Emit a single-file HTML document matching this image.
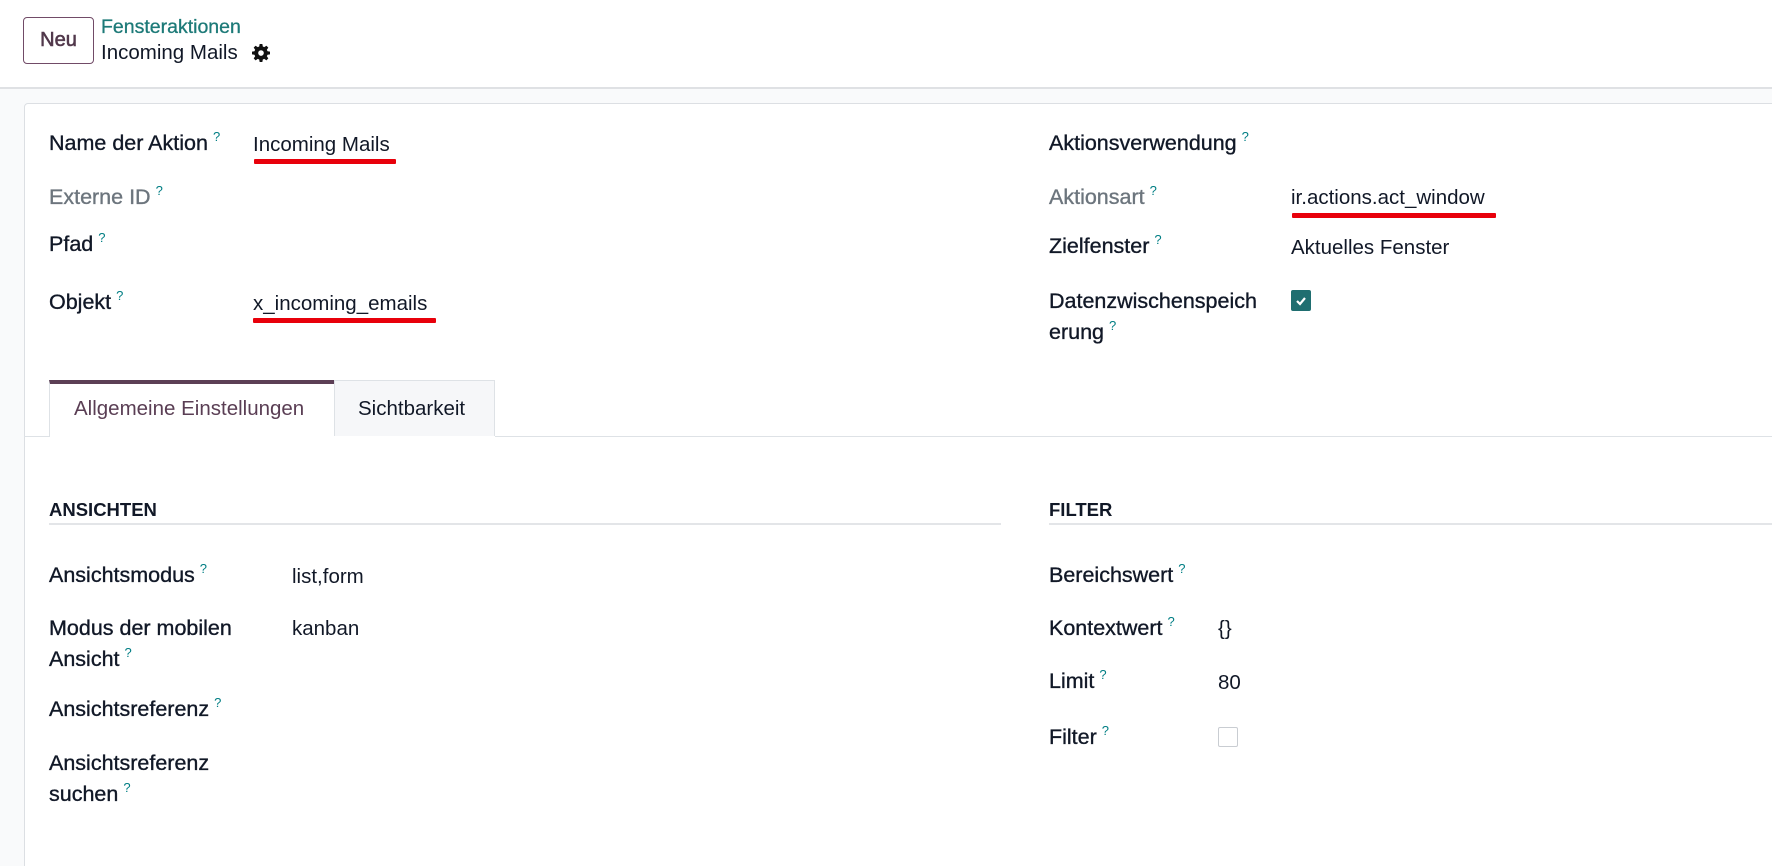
<!DOCTYPE html>
<html><head><meta charset="utf-8"><style>
*{margin:0;padding:0;box-sizing:border-box}
html,body{width:1772px;height:866px;overflow:hidden}
body{background:#f9fafb;font-family:"Liberation Sans",sans-serif;color:#111827;font-size:20.5px;position:relative}
.a{position:absolute;white-space:nowrap;line-height:24px}
.top{position:absolute;left:0;top:0;width:1772px;height:89px;background:#fff;border-bottom:2px solid #dfe1e4}
.card{position:absolute;left:24px;top:103px;width:1760px;height:770px;background:#fff;border:1px solid #dcdfe3;border-radius:4px 0 0 0}
.q{color:#017e84;font-size:13px;position:relative;top:-9px;margin-left:5px;-webkit-text-stroke:0}
.l,.g{font-size:21.5px}
.l{-webkit-text-stroke:0.35px #111827}
.g{color:#6c757d;-webkit-text-stroke:0.35px #6c757d}
.red{position:absolute;height:5px;background:#e8000b;border-radius:1px}
.b{font-weight:bold}
</style></head><body>
<div class="top"></div>
<div class="a" style="left:23px;top:17px;width:71px;height:47px;border:1.5px solid #714b67;border-radius:4px;text-align:center;line-height:44px;color:#51384b;font-size:20px;-webkit-text-stroke:0.6px #51384b">Neu</div>
<div class="a" style="left:101px;top:15px;color:#1d7a78;font-size:19.5px;-webkit-text-stroke:0.3px #1d7a78">Fensteraktionen</div>
<div class="a" style="left:101px;top:41px;font-size:20.5px">Incoming Mails</div>
<svg class="a" style="left:252px;top:44px" width="18" height="18" viewBox="0 0 16 16"><path fill="#111" d="M6.8 0h2.4l.4 2.2 1.3.6 1.9-1.3 1.7 1.7-1.3 1.9.6 1.3 2.2.4v2.4l-2.2.4-.6 1.3 1.3 1.9-1.7 1.7-1.9-1.3-1.3.6-.4 2.2H6.8l-.4-2.2-1.3-.6-1.9 1.3-1.7-1.7 1.3-1.9-.6-1.3L0 9.2V6.8l2.2-.4.6-1.3-1.3-1.9 1.7-1.7 1.9 1.3 1.3-.6zM8 5.5a2.5 2.5 0 100 5 2.5 2.5 0 000-5z"/></svg>
<div class="card"></div>

<div class="a l" style="left:49px;top:131px">Name der Aktion<span class="q">?</span></div>
<div class="a" style="left:253px;top:133px">Incoming Mails</div>
<div class="red" style="left:254px;top:159px;width:142px"></div>
<div class="a g" style="left:49px;top:185px">Externe ID<span class="q">?</span></div>
<div class="a l" style="left:49px;top:232px">Pfad<span class="q">?</span></div>
<div class="a l" style="left:49px;top:290px">Objekt<span class="q">?</span></div>
<div class="a" style="left:253px;top:292px">x_incoming_emails</div>
<div class="red" style="left:253px;top:318px;width:183px"></div>

<div class="a l" style="left:1049px;top:131px">Aktionsverwendung<span class="q">?</span></div>
<div class="a g" style="left:1049px;top:185px">Aktionsart<span class="q">?</span></div>
<div class="a" style="left:1291px;top:186px">ir.actions.act_window</div>
<div class="red" style="left:1292px;top:213px;width:204px"></div>
<div class="a l" style="left:1049px;top:234px">Zielfenster<span class="q">?</span></div>
<div class="a" style="left:1291px;top:236px">Aktuelles Fenster</div>
<div class="a l" style="left:1049px;top:286px;line-height:31px;white-space:normal">Datenzwischenspeich<br>erung<span class="q">?</span></div>
<div class="a" style="left:1291px;top:290px;width:20px;height:21px;background:#1f6e70;border-radius:2px"><svg width="20" height="21" viewBox="0 0 20 21" style="display:block"><path d="M6 11l3 3 5-6" stroke="#fff" stroke-width="2.2" fill="none"/></svg></div>

<div class="a" style="left:49px;top:380px;width:285px;height:57px;background:#fff;border-top:4px solid #5c3f55;border-left:1px solid #dee2e6"></div>
<div class="a" style="left:334px;top:380px;width:161px;height:56px;background:#f6f7f9;border:1px solid #dee2e6;border-bottom:none"></div>
<div class="a" style="left:24px;top:436px;width:25px;height:1px;background:#dee2e6"></div>
<div class="a" style="left:495px;top:436px;width:1280px;height:1px;background:#dee2e6"></div>
<div class="a" style="left:74px;top:397px;color:#5a3e54">Allgemeine Einstellungen</div>
<div class="a" style="left:358px;top:397px">Sichtbarkeit</div>

<div class="a b" style="left:49px;top:498px;font-size:18.5px">ANSICHTEN</div>
<div class="a" style="left:49px;top:523px;width:952px;height:2px;background:#e3e5e8"></div>
<div class="a b" style="left:1049px;top:498px;font-size:18.5px">FILTER</div>
<div class="a" style="left:1049px;top:523px;width:730px;height:2px;background:#e3e5e8"></div>

<div class="a l" style="left:49px;top:563px">Ansichtsmodus<span class="q">?</span></div>
<div class="a" style="left:292px;top:565px">list,form</div>
<div class="a l" style="left:49px;top:613px;line-height:31px">Modus der mobilen<br>Ansicht<span class="q">?</span></div>
<div class="a" style="left:292px;top:617px">kanban</div>
<div class="a l" style="left:49px;top:697px">Ansichtsreferenz<span class="q">?</span></div>
<div class="a l" style="left:49px;top:748px;line-height:31px">Ansichtsreferenz<br>suchen<span class="q">?</span></div>

<div class="a l" style="left:1049px;top:563px">Bereichswert<span class="q">?</span></div>
<div class="a l" style="left:1049px;top:616px">Kontextwert<span class="q">?</span></div>
<div class="a" style="left:1218px;top:617px">{}</div>
<div class="a l" style="left:1049px;top:669px">Limit<span class="q">?</span></div>
<div class="a" style="left:1218px;top:671px">80</div>
<div class="a l" style="left:1049px;top:725px">Filter<span class="q">?</span></div>
<div class="a" style="left:1218px;top:727px;width:20px;height:20px;border:1px solid #c9cdd2;border-radius:2px;background:#fff"></div>
</body></html>
